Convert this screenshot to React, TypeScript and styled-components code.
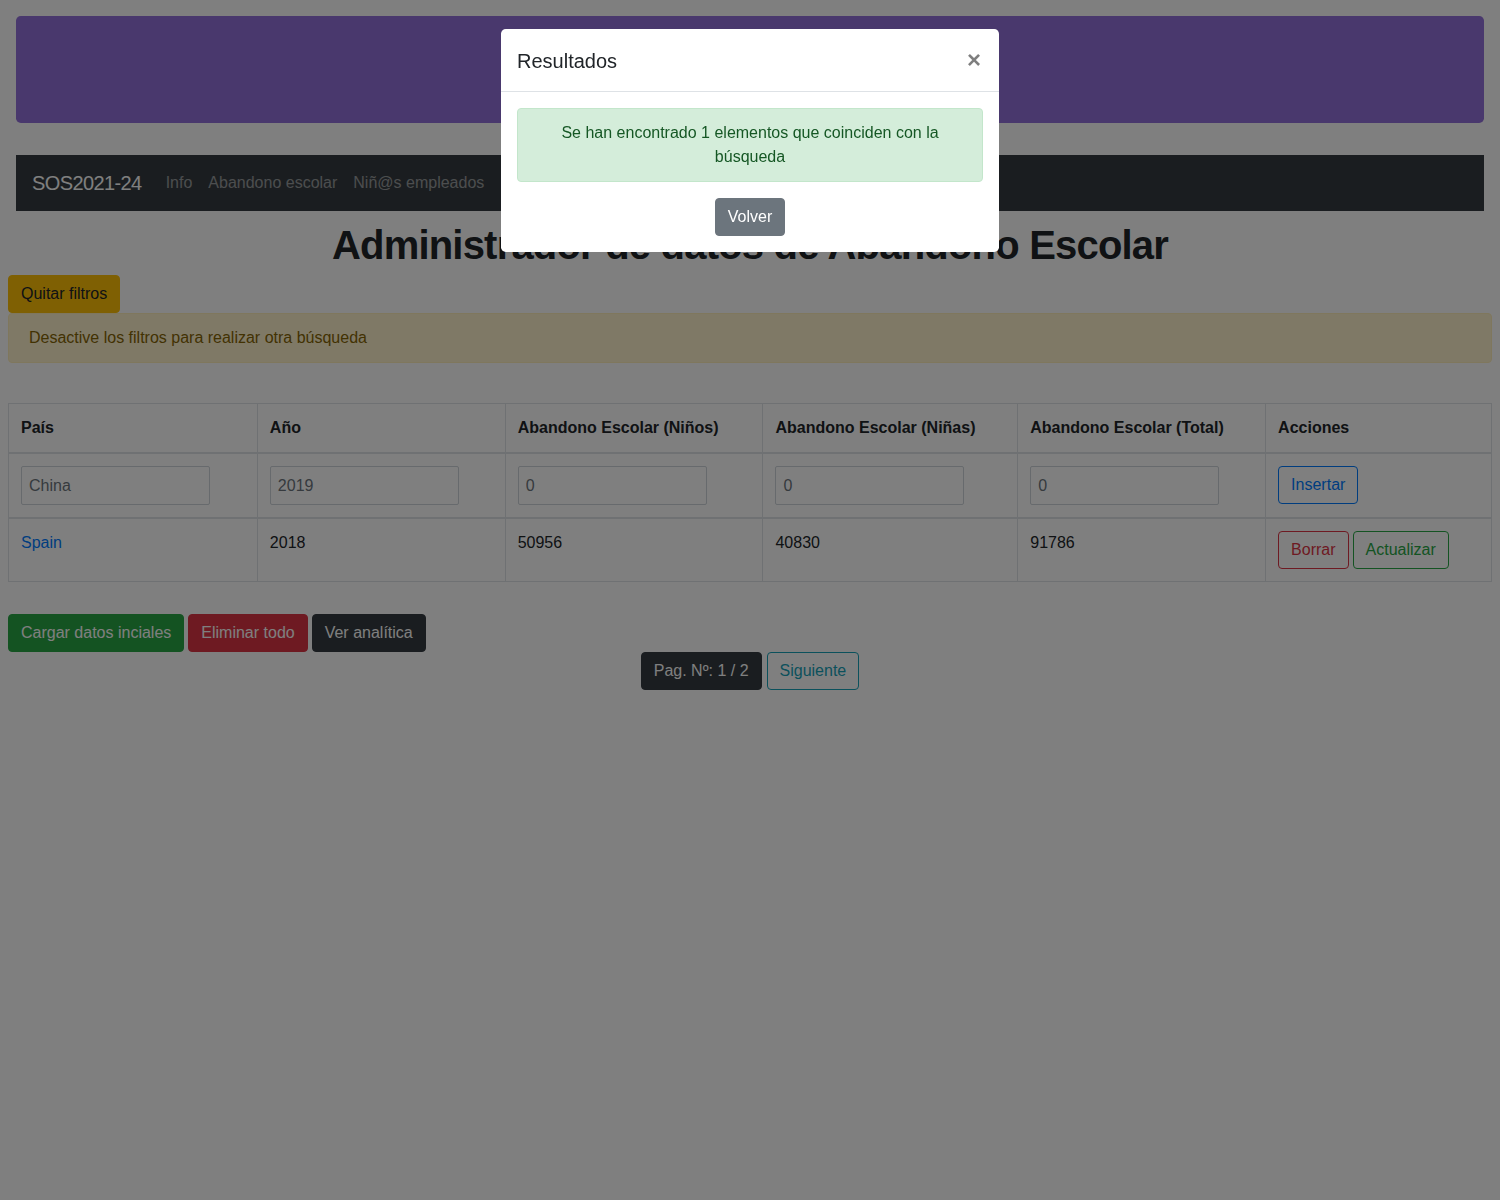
import React from "react";
import styled, { createGlobalStyle } from "styled-components";

const GlobalStyle = createGlobalStyle`
  *, *::before, *::after { box-sizing: border-box; }
  html { margin: 0; padding: 0; }
  body {
    margin: 8px;
    font-family: "Liberation Sans", Arial, sans-serif;
    font-size: 16px;
    line-height: 1.5;
    color: #212529;
    background: #fff;
  }
`;

const Jumbotron = styled.div`
  height: 107px;
  margin: 8px 8px 32px;
  background: #9370db;
  border-radius: 4.8px;
`;

const Navbar = styled.nav`
  margin: 0 8px;
  height: 56px;
  padding: 8px 16px;
  background: #343a40;
  display: flex;
  align-items: center;
`;

const Brand = styled.a`
  font-size: 20px;
  line-height: 30px;
  letter-spacing: -0.6px;
  color: #fff;
  margin-right: 16px;
  text-decoration: none;
`;

const NavLinks = styled.div`
  display: flex;
  align-items: center;
`;

const NavLink = styled.a`
  padding: 8px;
  color: rgba(255, 255, 255, 0.5);
  text-decoration: none;
  white-space: nowrap;
`;

const Title = styled.h1`
  margin: 10px 0 6px;
  text-align: center;
  font-size: 40px;
  line-height: 48px;
  letter-spacing: -0.8px;
  font-weight: 700;
`;

type Variant = "warning" | "success" | "danger" | "dark" | "secondary";
const fills: Record<Variant, { bg: string; fg: string }> = {
  warning: { bg: "#ffc107", fg: "#212529" },
  success: { bg: "#28a745", fg: "#fff" },
  danger: { bg: "#dc3545", fg: "#fff" },
  dark: { bg: "#343a40", fg: "#fff" },
  secondary: { bg: "#6c757d", fg: "#fff" },
};

const Button = styled.button<{ $v: Variant }>`
  display: inline-block;
  font-family: inherit;
  font-size: 16px;
  line-height: 24px;
  padding: 6px 12px;
  border: 1px solid ${(p) => fills[p.$v].bg};
  border-radius: 4px;
  background: ${(p) => fills[p.$v].bg};
  color: ${(p) => fills[p.$v].fg};
  cursor: pointer;
`;

type Outline = "primary" | "danger" | "success" | "info";
const outlines: Record<Outline, string> = {
  primary: "#007bff",
  danger: "#dc3545",
  success: "#28a745",
  info: "#17a2b8",
};

const OutlineButton = styled.button<{ $v: Outline }>`
  display: inline-block;
  font-family: inherit;
  font-size: 16px;
  line-height: 24px;
  padding: 6px 12px;
  border: 1px solid ${(p) => outlines[p.$v]};
  border-radius: 4px;
  background: transparent;
  color: ${(p) => outlines[p.$v]};
  cursor: pointer;
`;

const Alert = styled.div<{ $kind: "warning" | "success"; $center?: boolean }>`
  padding: 12px 20px;
  border-radius: 4px;
  border: 1px solid ${(p) => (p.$kind === "warning" ? "#ffeeba" : "#c3e6cb")};
  background: ${(p) => (p.$kind === "warning" ? "#fff3cd" : "#d4edda")};
  color: ${(p) => (p.$kind === "warning" ? "#856404" : "#155724")};
  text-align: ${(p) => (p.$center ? "center" : "left")};
`;

const FilterAlert = styled(Alert)`
  margin-bottom: 40px;
`;

const Table = styled.table`
  width: 100%;
  border-collapse: collapse;
  border: 1px solid #dee2e6;
  margin-bottom: 32px;
`;

const Th = styled.th<{ $w: number }>`
  width: ${(p) => p.$w}px;
  text-align: left;
  padding: 12px;
  border: 1px solid #dee2e6;
  border-bottom-width: 2px;
  font-weight: 700;
  vertical-align: bottom;
`;

const Td = styled.td<{ $thick?: boolean }>`
  padding: 12px;
  border: 1px solid #dee2e6;
  border-bottom-width: ${(p) => (p.$thick ? 2 : 1)}px;
  vertical-align: top;
`;

const Input = styled.input`
  width: 189px;
  height: 39px;
  padding: 0 7px;
  font-family: inherit;
  font-size: 16px;
  color: #6c757d;
  border: 1px solid #ced4da;
  border-radius: 2px;
  background: #fff;
`;

const Link = styled.a`
  color: #007bff;
  text-decoration: none;
`;

const Actions = styled.div`
  display: flex;
  gap: 4px;
`;

const ButtonRow = styled.div`
  display: flex;
  gap: 4px;
`;

const Pager = styled.div`
  display: flex;
  justify-content: center;
  gap: 5px;
`;

const Backdrop = styled.div`
  position: fixed;
  inset: 0;
  background: rgba(0, 0, 0, 0.5);
`;

const ModalDialog = styled.div`
  width: 498px;
  margin: 29px auto 0;
  background: #fff;
  border-radius: 4.8px;
  overflow: hidden;
`;

const ModalHeader = styled.div`
  display: flex;
  align-items: center;
  justify-content: space-between;
  padding: 17px 16px 15px;
  height: 63px;
  border-bottom: 1px solid #dee2e6;
`;

const ModalTitle = styled.h5`
  margin: 0;
  font-size: 20px;
  line-height: 30px;
  font-weight: 500;
`;

const Close = styled.button`
  border: 0;
  background: transparent;
  padding: 0;
  margin: -2px 2px 0 0;
  font-family: inherit;
  font-size: 24px;
  line-height: 1;
  font-weight: 700;
  color: #000;
  opacity: 0.5;
`;

const ModalBody = styled.div`
  padding: 16px;
  display: flex;
  flex-direction: column;
  align-items: center;
  gap: 16px;
`;

const ResultAlert = styled(Alert)`
  align-self: stretch;
`;

const cols = [249, 248, 258, 255, 248, 226];

export default function App() {
  return (
    <>
      <GlobalStyle />
      <Jumbotron />
      <Navbar>
        <Brand href="#">SOS2021-24</Brand>
        <NavLinks>
          <NavLink href="#">Info</NavLink>
          <NavLink href="#">Abandono escolar</NavLink>
          <NavLink href="#">Niñ@s empleados</NavLink>
          <NavLink href="#">Población</NavLink>
        </NavLinks>
      </Navbar>
      <Title>Administrador de datos de Abandono Escolar</Title>
      <Button $v="warning">Quitar filtros</Button>
      <FilterAlert $kind="warning">Desactive los filtros para realizar otra búsqueda</FilterAlert>
      <Table>
        <thead>
          <tr>
            <Th $w={cols[0]}>País</Th>
            <Th $w={cols[1]}>Año</Th>
            <Th $w={cols[2]}>Abandono Escolar (Niños)</Th>
            <Th $w={cols[3]}>Abandono Escolar (Niñas)</Th>
            <Th $w={cols[4]}>Abandono Escolar (Total)</Th>
            <Th $w={cols[5]}>Acciones</Th>
          </tr>
        </thead>
        <tbody>
          <tr>
            <Td $thick><Input defaultValue="China" /></Td>
            <Td $thick><Input defaultValue="2019" /></Td>
            <Td $thick><Input defaultValue="0" /></Td>
            <Td $thick><Input defaultValue="0" /></Td>
            <Td $thick><Input defaultValue="0" /></Td>
            <Td $thick><OutlineButton $v="primary">Insertar</OutlineButton></Td>
          </tr>
          <tr>
            <Td><Link href="#">Spain</Link></Td>
            <Td>2018</Td>
            <Td>50956</Td>
            <Td>40830</Td>
            <Td>91786</Td>
            <Td>
              <Actions>
                <OutlineButton $v="danger">Borrar</OutlineButton>
                <OutlineButton $v="success">Actualizar</OutlineButton>
              </Actions>
            </Td>
          </tr>
        </tbody>
      </Table>
      <ButtonRow>
        <Button $v="success">Cargar datos inciales</Button>
        <Button $v="danger">Eliminar todo</Button>
        <Button $v="dark">Ver analítica</Button>
      </ButtonRow>
      <Pager>
        <Button $v="dark">Pag. Nº: 1 / 2</Button>
        <OutlineButton $v="info">Siguiente</OutlineButton>
      </Pager>
      <Backdrop>
        <ModalDialog>
          <ModalHeader>
            <ModalTitle>Resultados</ModalTitle>
            <Close aria-label="Close">×</Close>
          </ModalHeader>
          <ModalBody>
            <ResultAlert $kind="success" $center>
              Se han encontrado 1 elementos que coinciden con la búsqueda
            </ResultAlert>
            <Button $v="secondary">Volver</Button>
          </ModalBody>
        </ModalDialog>
      </Backdrop>
    </>
  );
}
